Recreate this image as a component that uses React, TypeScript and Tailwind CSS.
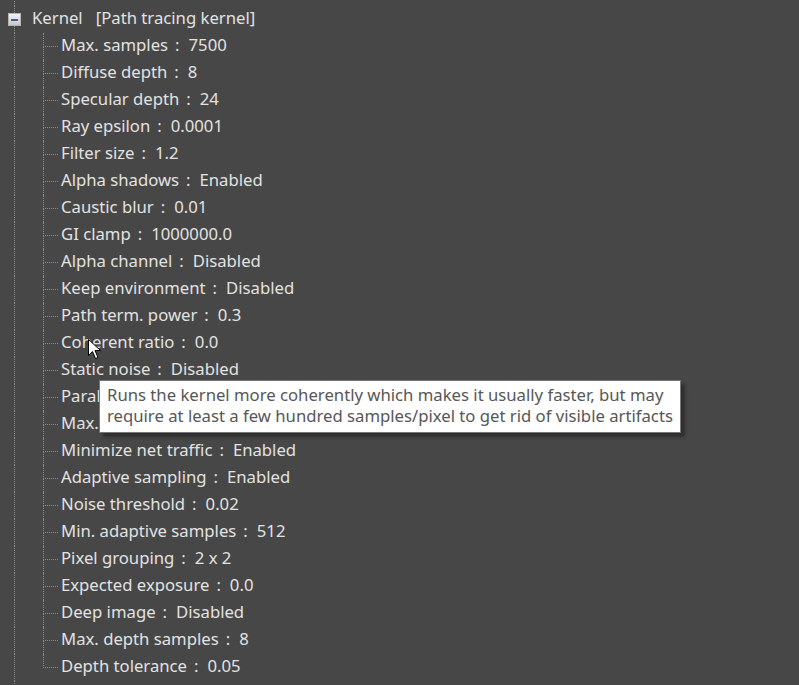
import React from "react";

const items: [string, string][] = [
  ["Max. samples", "7500"],
  ["Diffuse depth", "8"],
  ["Specular depth", "24"],
  ["Ray epsilon", "0.0001"],
  ["Filter size", "1.2"],
  ["Alpha shadows", "Enabled"],
  ["Caustic blur", "0.01"],
  ["GI clamp", "1000000.0"],
  ["Alpha channel", "Disabled"],
  ["Keep environment", "Disabled"],
  ["Path term. power", "0.3"],
  ["Coherent ratio", "0.0"],
  ["Static noise", "Disabled"],
  ["Parallel samples", "16"],
  ["Max. tile samples", "32"],
  ["Minimize net traffic", "Enabled"],
  ["Adaptive sampling", "Enabled"],
  ["Noise threshold", "0.02"],
  ["Min. adaptive samples", "512"],
  ["Pixel grouping", "2 x 2"],
  ["Expected exposure", "0.0"],
  ["Deep image", "Disabled"],
  ["Max. depth samples", "8"],
  ["Depth tolerance", "0.05"],
];

const dot = "border-[#8c8c8c] border-dotted";

function ChildRow({ label, value, last }: { label: string; value: string; last: boolean }) {
  return (
    <div className="flex h-[27px] items-stretch">
      <div className="w-[14px] shrink-0" />
      <div className={`w-[29px] shrink-0 border-l ${dot}`} />
      <div className="flex w-[15px] shrink-0 flex-col">
        <div className={`h-[14px] border-b border-l ${dot}`} />
        <div className={`flex-1 ${last ? "" : `border-l ${dot}`}`} />
      </div>
      <div className="flex items-center pb-[3px] pl-[3px] whitespace-pre">
        <span>{label}</span>
        <span className="ml-[7px] mr-[9px]">:</span>
        <span>{value}</span>
      </div>
    </div>
  );
}

function Cursor() {
  return (
    <svg
      className="absolute left-[88px] top-[339px]"
      width="14"
      height="22"
      viewBox="0 0 14 22"
    >
      <path
        d="M0.5 0.5 L0.5 16.5 L4.5 12.5 L7.5 19.5 L10 18.5 L7 11.5 L12.5 11.5 Z"
        fill="#ffffff"
        stroke="#000000"
        strokeWidth="1"
        strokeLinejoin="miter"
      />
    </svg>
  );
}

export default function App() {
  return (
    <div
      className="relative h-[685px] w-[799px] overflow-hidden bg-[#474747] text-[16.7px] text-[#e2e2e2]"
      style={{ fontFamily: '"Noto Sans", "Open Sans", sans-serif' }}
    >
      <div className="-mt-[21px] flex flex-col">
        {/* previous row (mostly cut off) */}
        <div className="flex h-[27px] items-stretch">
          <div className="w-[14px] shrink-0" />
          <div className={`flex-1 border-l ${dot}`} />
        </div>
        {/* Kernel row */}
        <div className="flex h-[27px] items-center">
          <div className="flex h-full w-[28px] shrink-0 flex-col">
            <div className="ml-[14px] h-[7px] border-l border-dotted border-[#8c8c8c]" />
            <div className="ml-[8px] flex h-[13px] w-[13px] items-center justify-center border border-[#b4b4b4] bg-gradient-to-b from-[#f4f4f4] to-[#c9c9c9]">
              <div className="h-[2px] w-[7px] bg-[#3f5f9f]" />
            </div>
            <div className="ml-[14px] flex-1 border-l border-dotted border-[#8c8c8c]" />
          </div>
          <div className="pb-[3px] pl-[4px] whitespace-pre">
            Kernel{"   "}[Path tracing kernel]
          </div>
        </div>
        {items.map(([l, v], i) => (
          <ChildRow key={l} label={l} value={v} last={i === items.length - 1} />
        ))}
        <div className="flex h-[27px] items-stretch">
          <div className="w-[14px] shrink-0" />
          <div className={`flex-1 border-l ${dot}`} />
        </div>
      </div>

      {/* tooltip */}
      <div className="absolute left-[99px] top-[380px] border border-[#767676] bg-white px-[7px] pb-[6px] pt-[3px] text-[16.7px] leading-[21px] text-[#575757] shadow-[4px_4px_3px_rgba(0,0,0,0.35)]">
        <div>Runs the kernel more coherently which makes it usually faster, but may</div>
        <div>require at least a few hundred samples/pixel to get rid of visible artifacts</div>
      </div>
      <Cursor />
    </div>
  );
}
